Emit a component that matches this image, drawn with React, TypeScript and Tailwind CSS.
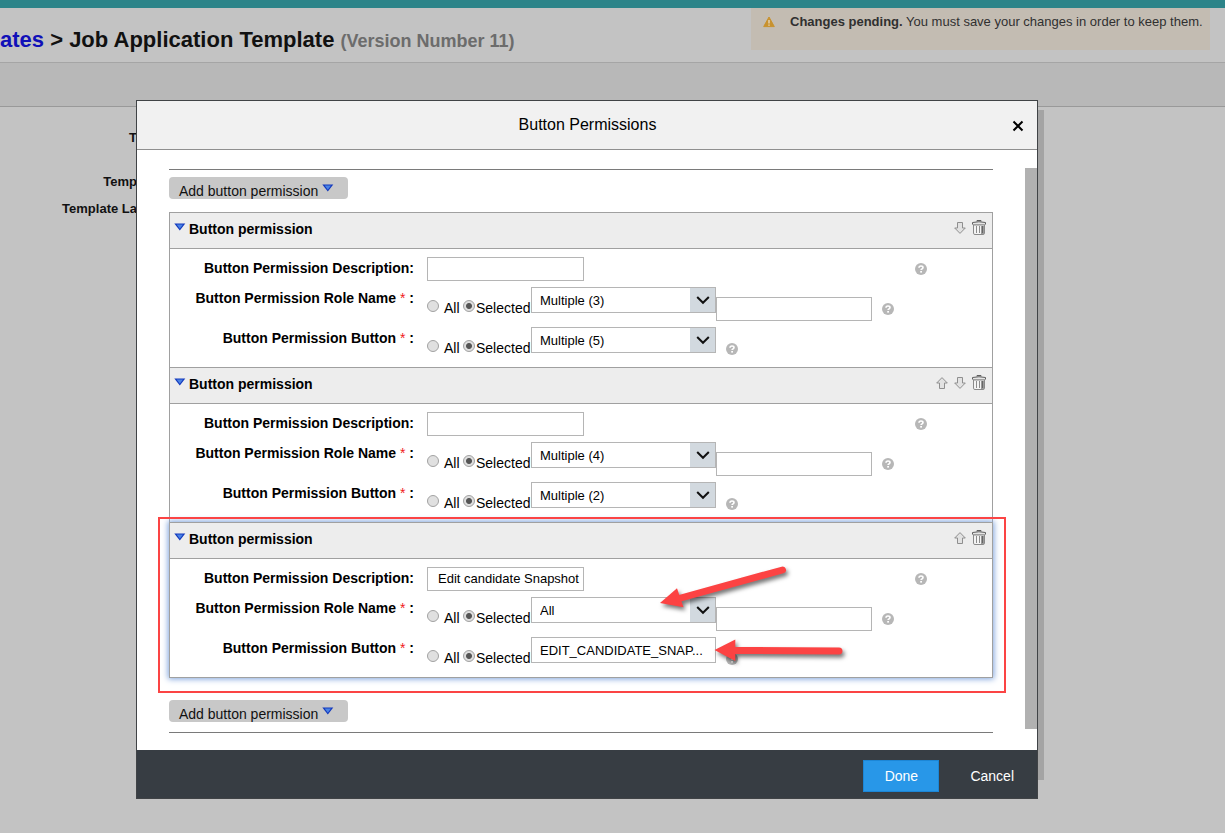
import type { ReactNode } from 'react';

type Permission = {
  id: string;
  description: string;
  role: string;
  button: string;
  canMoveUp: boolean;
  canMoveDown: boolean;
  highlighted?: boolean;
};

const permissions: Permission[] = [
  { id: 'p1', description: '', role: 'Multiple (3)', button: 'Multiple (5)', canMoveUp: false, canMoveDown: true },
  { id: 'p2', description: '', role: 'Multiple (4)', button: 'Multiple (2)', canMoveUp: true, canMoveDown: true },
  {
    id: 'p3',
    description: 'Edit candidate Snapshot',
    role: 'All',
    button: 'EDIT_CANDIDATE_SNAP...',
    canMoveUp: true,
    canMoveDown: false,
    highlighted: true,
  },
];

function Triangle() {
  return (
    <svg width="12" height="8" viewBox="0 0 12 8" className="shrink-0" aria-hidden="true">
      <path d="M0.3 0.4H11.3L5.8 7.6Z" fill="#1238bd" />
      <path d="M2.6 1.6H9L5.8 5.8Z" fill="#4a83e4" />
    </svg>
  );
}

function MoveArrow({ up }: { up?: boolean }) {
  return (
    <svg width="12" height="12" viewBox="0 0 12 12" className={up ? 'rotate-180' : ''} aria-hidden="true">
      <path d="M3.5 0.5H8.5V6H11.3L6 11.4L0.7 6H3.5Z" fill="#e2e2e2" stroke="#8f8f8f" />
    </svg>
  );
}

function Trash() {
  return (
    <svg width="14" height="15" viewBox="0 0 14 15" aria-hidden="true">
      <path d="M1.5 5H12.5V13.2Q12.5 14.5 11 14.5H3Q1.5 14.5 1.5 13.2Z" fill="#f4f4f4" stroke="#8a8a8a" />
      <path d="M4.5 6V13M7.5 6V13" stroke="#8c8c8c" />
      <path d="M9 6H12V14H9Z" fill="#9a9a9a" />
      <path d="M10.5 6V13" stroke="#666" />
      <path d="M0.5 4.5V2.4Q7 0.8 13.5 2.4V4.5Z" fill="#e4e4e4" />
      <path d="M0.5 4.5V2.5Q7 1 13.5 2.5V4.5M5 1.5V0.5H9V1.5" fill="none" stroke="#5f5f5f" />
      <path d="M1 4.5H13" stroke="#a0a0a0" />
    </svg>
  );
}

function Help() {
  return (
    <button type="button" aria-label="Help" className="block size-3 shrink-0">
      <svg width="12" height="12" viewBox="0 0 12 12" aria-hidden="true">
        <circle cx="6" cy="6" r="6" fill="#b7b7b7" />
        <path d="M4 4.8Q4 3 6 3Q8 3 8 4.6Q8 5.5 6.9 6Q6.1 6.3 6.1 7" fill="none" stroke="#fff" strokeWidth="1.6" />
        <rect x="5.2" y="8" width="1.8" height="1.6" fill="#fff" />
      </svg>
    </button>
  );
}

function Radios({ name }: { name: string }) {
  const radio =
    'mb-1 size-3 appearance-none rounded-full border border-[#a2a2a2] bg-[#e0e0e0] checked:bg-[radial-gradient(circle,#555_2.5px,#dedede_3.5px)]';
  return (
    <div className="flex h-5 items-center text-sm leading-5">
      <input type="radio" name={name} id={name + '-all'} className={radio + ' mr-[5px]'} />
      <label htmlFor={name + '-all'} className="w-[19px]">
        All
      </label>
      <input type="radio" name={name} id={name + '-sel'} defaultChecked className={radio + ' mr-px'} />
      <label htmlFor={name + '-sel'} className="w-[55px]">
        Selected
      </label>
    </div>
  );
}

function Picker({ id, value }: { id: string; value: string }) {
  return (
    <div className="relative h-[26px] w-[185px]">
      <select
        id={id}
        defaultValue={value}
        className="h-full w-full appearance-none border border-[#b5b5b5] bg-white pt-0.5 pl-2 text-[13px] leading-5"
      >
        <option>{value}</option>
      </select>
      <span className="pointer-events-none absolute inset-y-px right-px flex w-[25px] items-center justify-center bg-[#d2d9df]">
        <svg width="14" height="9" viewBox="0 0 14 9" aria-hidden="true">
          <path d="M1.2 1L7 6.8L12.8 1" fill="none" stroke="#111" strokeWidth="2" />
        </svg>
      </span>
    </div>
  );
}

function FieldLabel({ htmlFor, required, children }: { htmlFor: string; required?: boolean; children: ReactNode }) {
  return (
    <label htmlFor={htmlFor} className="w-61 shrink-0 text-right text-sm leading-[22px] font-bold">
      {children}
      {required && <span className="font-normal text-[#f02020]"> * </span>}:
    </label>
  );
}

function Annotations() {
  return (
    <>
      <div className="pointer-events-none absolute -top-1.5 -right-3.5 -bottom-4 -left-3 border-2 border-[#fb4444]" />
      <svg
        width="220"
        height="110"
        viewBox="0 0 220 110"
        className="pointer-events-none absolute top-[37px] left-[475px] drop-shadow-[2px_3px_2px_rgba(0,0,0,0.55)]"
        aria-hidden="true"
      >
        <g fill="#fc4343" stroke="#fc4343" strokeLinecap="round">
          <path d="M15 43L32 28.3L38.5 47.3Z" stroke="none" />
          <path d="M34 38.5L137.5 10" strokeWidth="7" />
          <path d="M69.5 90L90.3 79.5V101Z" stroke="none" />
          <path d="M88 90.4L194 91" strokeWidth="7" />
        </g>
      </svg>
    </>
  );
}

function PermissionSection({ item }: { item: Permission }) {
  return (
    <section
      className={
        item.highlighted
          ? 'relative border border-[#a0a0a0] shadow-[0_0_6px_1px_#7ea3dc]'
          : 'border border-b-0 border-[#a0a0a0]'
      }
    >
      <header className="flex h-9 items-center border-b border-[#a0a0a0] bg-[#ededed] pr-1.5 pb-1 pl-1">
        <button type="button" className="flex items-center gap-[3px] text-sm leading-5 font-bold">
          <span className="pb-1">
            <Triangle />
          </span>
          Button permission
        </button>
        <div className="ml-auto flex items-center gap-1.5 pb-0.5">
          {item.canMoveUp && (
            <button type="button" aria-label="Move up">
              <MoveArrow up />
            </button>
          )}
          {item.canMoveDown && (
            <button type="button" aria-label="Move down">
              <MoveArrow />
            </button>
          )}
          <button type="button" aria-label="Delete">
            <Trash />
          </button>
        </div>
      </header>
      <div className="pt-2">
        <div className="flex h-[30px] items-start">
          <FieldLabel htmlFor={item.id + '-desc'}>Button Permission Description</FieldLabel>
          <input
            id={item.id + '-desc'}
            type="text"
            defaultValue={item.description}
            className="ml-[13px] h-6 w-[157px] border border-[#b5b5b5] pb-0.5 pl-2.5 text-[13px]"
          />
          <div className="mt-1.5 mr-[65px] ml-auto">
            <Help />
          </div>
        </div>
        <div className="flex h-10 items-start">
          <FieldLabel htmlFor={item.id + '-role'} required>
            Button Permission Role Name
          </FieldLabel>
          <div className="mt-[11px] ml-[13px]">
            <Radios name={item.id + '-role-mode'} />
          </div>
          <Picker id={item.id + '-role'} value={item.role} />
          <input
            type="text"
            aria-label="Role filter"
            className="mt-2.5 h-6 w-[156px] border border-[#b5b5b5] px-2 text-[13px]"
          />
          <div className="mt-4 ml-2.5">
            <Help />
          </div>
        </div>
        <div className="flex h-10 items-start">
          <FieldLabel htmlFor={item.id + '-button'} required>
            Button Permission Button
          </FieldLabel>
          <div className="mt-[11px] ml-[13px]">
            <Radios name={item.id + '-button-mode'} />
          </div>
          {item.highlighted ? (
            <input
              id={item.id + '-button'}
              type="text"
              defaultValue={item.button}
              className="h-[26px] w-[185px] border border-[#b5b5b5] pl-2 text-[13px]"
            />
          ) : (
            <Picker id={item.id + '-button'} value={item.button} />
          )}
          <div className="mt-4 ml-2.5">
            <Help />
          </div>
        </div>
      </div>
      {item.highlighted && <Annotations />}
    </section>
  );
}

function AddButton() {
  return (
    <button
      type="button"
      className="flex h-[22px] w-[179px] items-center gap-1 rounded-sm bg-[#c8c8c8] pt-1.5 pl-2.5 text-sm leading-5 text-[#111]"
    >
      Add button permission
      <span className="pb-1.5">
        <Triangle />
      </span>
    </button>
  );
}

function BackgroundPage() {
  return (
    <div className="min-h-screen bg-[#c3c3c3]">
      <div className="h-2 bg-[#2c8489]" />
      <header className="flex h-[55px] items-start justify-between border-b border-[#a5a5a5] pr-[15px]">
        <h1 className="pt-4 text-[22px] leading-8 font-bold whitespace-nowrap text-[#111]">
          <a href="#templates" className="text-[#1010b8]">
            ates
          </a>{' '}
          &gt; Job Application Template <span className="text-lg leading-8 text-[#6c6c6c]">(Version Number 11)</span>
        </h1>
        <div className="flex h-[42px] w-[459px] items-start bg-[#c3bcb2] pt-1 pl-3 text-[13px] leading-5 whitespace-nowrap text-[#303030]">
          <svg width="12" height="12" viewBox="0 0 12 12" className="mt-1 mr-[15px] shrink-0" aria-hidden="true">
            <path d="M6 1L11.3 10.6H0.7Z" fill="#c8922f" stroke="#c8922f" strokeLinejoin="round" />
            <path d="M6 4V7.4M6 8.4V9.8" stroke="#e8dcc6" strokeWidth="1.3" />
          </svg>
          <p>
            <strong>Changes pending.</strong> You must save your changes in order to keep them.
          </p>
        </div>
      </header>
      <div className="h-11 border-b border-[#999] bg-[#b8b8b8]" />
      <div className="flex w-[137px] flex-col pt-[21px] text-right text-[13px] leading-5 font-bold text-[#111]">
        <span>T</span>
        <span className="mt-6">Temp</span>
        <span className="mt-[7px]">Template La</span>
      </div>
    </div>
  );
}

export default function App() {
  return (
    <div className="overflow-hidden font-['Liberation_Sans',Arial,sans-serif] text-black">
      <BackgroundPage />
      <div className="absolute inset-x-0 top-[100px] flex justify-center pr-[51px]">
        <div role="dialog" aria-labelledby="dialog-title" className="relative w-full max-w-[902px] border border-[#404346] bg-white">
          <div className="absolute top-[9px] -right-[7px] bottom-[18px] w-1.5 bg-[#a4a4a4]" />
          <header className="flex h-[49px] items-center border-b border-[#8f8f8f] bg-[#f1f1f1]">
            <h2 id="dialog-title" className="flex-1 pl-7 text-center text-base leading-6">
              Button Permissions
            </h2>
            <button type="button" aria-label="Close" className="mr-[11px] flex size-4 items-center justify-center">
              <svg width="12" height="12" viewBox="0 0 12 12" className="mt-0.5" aria-hidden="true">
                <path d="M1.5 1.5L10.5 10.5M10.5 1.5L1.5 10.5" stroke="#000" strokeWidth="2" />
              </svg>
            </button>
          </header>
          <div className="flex">
            <div className="min-w-0 flex-1 px-8 pt-[19px] pb-[17px]">
              <div className="border-y border-[#7a7a7a] pt-[7px] pb-2.5">
                <AddButton />
                <div className="mt-[13px] mb-[22px]">
                  {permissions.map((item) => (
                    <PermissionSection key={item.id} item={item} />
                  ))}
                </div>
                <AddButton />
              </div>
            </div>
            <div className="mt-[18px] mb-[21px] w-3 bg-[#b1b1b1]" />
          </div>
          <footer className="flex h-12 items-center justify-end gap-[31px] bg-[#373d43] pt-[3px] pr-[23px] text-sm text-white">
            <button type="button" className="h-8 w-[76px] border border-[#1c86d6] bg-[#2897e8]">
              Done
            </button>
            <button type="button">Cancel</button>
          </footer>
        </div>
      </div>
    </div>
  );
}
